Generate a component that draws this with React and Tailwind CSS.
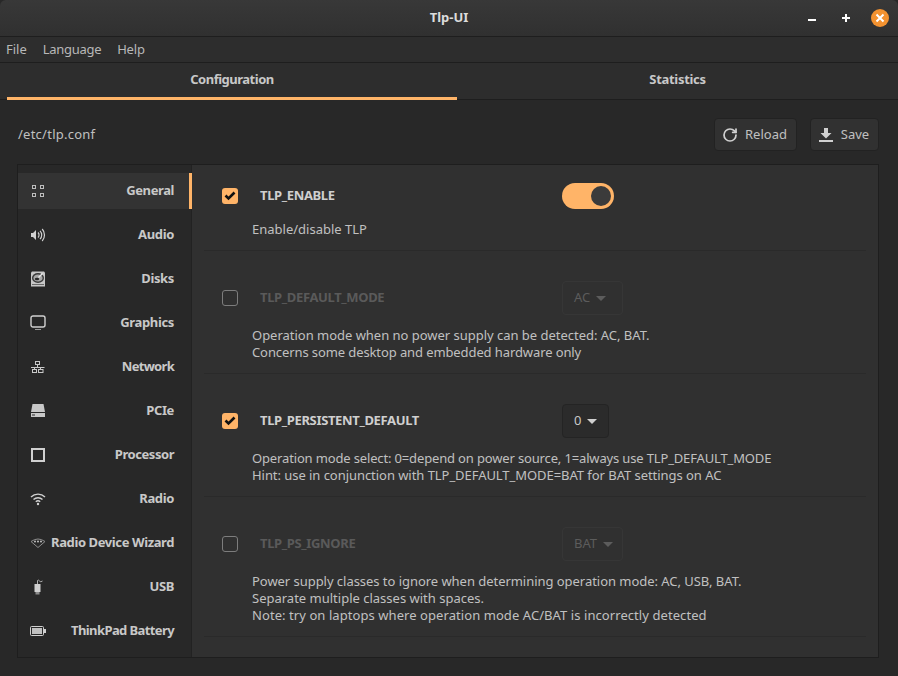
import React from 'react';
import { RotateCw } from 'lucide-react';

const FONT = "font-['Noto_Sans',sans-serif]";

const GeneralIcon = () => (
  <svg width="16" height="16" viewBox="0 0 16 16" fill="none" stroke="#bdbdbd" strokeWidth="1">
    <rect x="2.5" y="2.5" width="3" height="3" />
    <rect x="10.5" y="2.5" width="3" height="3" />
    <rect x="2.5" y="10.5" width="3" height="3" />
    <rect x="10.5" y="10.5" width="3" height="3" />
  </svg>
);

const AudioIcon = () => (
  <svg width="16" height="16" viewBox="0 0 16 16" fill="none" stroke="#d0d0d0" strokeWidth="1.2">
    <path d="M1 6h2l3-3v10l-3-3H1z" fill="#d0d0d0" stroke="none" />
    <path d="M8 5.5a3.5 3.5 0 0 1 0 5" />
    <path d="M10 3.8a6 6 0 0 1 0 8.4" />
    <path d="M12.2 2a9 9 0 0 1 0 12" />
  </svg>
);

const DiskIcon = () => (
  <svg width="16" height="16" viewBox="0 0 16 16" fill="none">
    <path d="M2 0.5h12l1 1v14H1v-14z" fill="#c8c8c8" />
    <ellipse cx="8" cy="7" rx="6" ry="5" fill="#3a3a3a" />
    <ellipse cx="8" cy="7" rx="4.6" ry="3.6" fill="#a8a8a8" />
    <ellipse cx="7" cy="8" rx="2.2" ry="1.2" fill="#2a2a2a" />
    <path d="M12.5 2.5 8.5 6.5" stroke="#e8e8e8" strokeWidth="1.4" />
    <rect x="2" y="13" width="12" height="1" fill="#6a6a6a" />
  </svg>
);

const MonitorIcon = () => (
  <svg width="16" height="16" viewBox="0 0 16 16" fill="none">
    <rect x="1" y="1" width="14" height="11" rx="2" stroke="#d0d0d0" strokeWidth="1.4" />
    <rect x="5" y="14" width="6" height="1" fill="#9a9a9a" />
  </svg>
);

const NetworkIcon = () => (
  <svg width="16" height="16" viewBox="0 0 16 16" fill="none" stroke="#c8c8c8" strokeWidth="1">
    <rect x="5.5" y="2.5" width="4" height="3" />
    <rect x="2.5" y="10.5" width="4" height="3" />
    <rect x="8.5" y="10.5" width="4.5" height="3" />
    <path d="M7.5 5.5v3M1 8.5h13.5M4.5 8.5v2M10.5 8.5v2" />
  </svg>
);

const PcieIcon = () => (
  <svg width="16" height="16" viewBox="0 0 16 16">
    <path d="M2.5 1h11l1.5 8H1z" fill="#c8c8c8" />
    <rect x="1" y="10" width="14" height="4" fill="#c8c8c8" />
    <rect x="2" y="11.5" width="3" height="1" fill="#2a2a2a" />
  </svg>
);

const CpuIcon = () => (
  <svg width="16" height="16" viewBox="0 0 16 16" fill="none">
    <rect x="2" y="2" width="12" height="12" stroke="#d0d0d0" strokeWidth="2" />
  </svg>
);

const WifiIcon = () => (
  <svg width="16" height="16" viewBox="0 0 16 16" fill="none" stroke="#d0d0d0" strokeWidth="1.4">
    <path d="M1 6a10 10 0 0 1 14 0" />
    <path d="M3.5 8.6a6.5 6.5 0 0 1 9 0" />
    <path d="M5.8 10.8a3.2 3.2 0 0 1 4.4 0" />
    <circle cx="8" cy="13" r="1.2" fill="#d0d0d0" stroke="none" />
  </svg>
);

const WizardIcon = () => (
  <svg width="16" height="16" viewBox="0 0 16 16" fill="none">
    <path d="M1 6.5Q8 1.5 15 6.5L8 12.5z" stroke="#8c8c8c" strokeWidth="1" />
    <circle cx="5" cy="6.5" r="0.9" fill="#d0d0d0" />
    <circle cx="8" cy="6.5" r="0.9" fill="#d0d0d0" />
    <circle cx="11" cy="6.5" r="0.9" fill="#d0d0d0" />
  </svg>
);

const UsbIcon = () => (
  <svg width="16" height="16" viewBox="0 0 16 16" fill="none">
    <rect x="4.5" y="5" width="6" height="8" fill="#d0d0d0" />
    <rect x="5.5" y="13" width="4" height="2.5" fill="#8c8c8c" />
    <path d="M7.5 5V1.5q1-1 2 .5t3 0" stroke="#b0b0b0" strokeWidth="1" />
  </svg>
);

const BatteryIcon = () => (
  <svg width="16" height="16" viewBox="0 0 16 16" fill="none">
    <rect x="0.5" y="3.5" width="13" height="9" rx="1" stroke="#d0d0d0" strokeWidth="1" />
    <rect x="2" y="5" width="10" height="6" fill="#c0c0c0" />
    <rect x="14" y="6" width="2" height="4" fill="#d0d0d0" />
  </svg>
);

const SaveIcon = () => (
  <svg width="16" height="16" viewBox="0 0 16 16" fill="#d0d0d0">
    <path d="M6 1h4v5h3.5L8 11.5 2.5 6H6z" />
    <rect x="1" y="13" width="14" height="2" />
  </svg>
);

const sections = [
  { name: 'General', icon: GeneralIcon, active: true, fit: 'tracking-[-0.4px]' },
  { name: 'Audio', icon: AudioIcon, fit: 'tracking-[-0.35px]' },
  { name: 'Disks', icon: DiskIcon, fit: 'tracking-[-0.35px]' },
  { name: 'Graphics', icon: MonitorIcon, fit: 'tracking-[-0.35px]' },
  { name: 'Network', icon: NetworkIcon, fit: 'tracking-[-0.7px]' },
  { name: 'PCIe', icon: PcieIcon, fit: 'tracking-[-0.35px]' },
  { name: 'Processor', icon: CpuIcon, fit: 'tracking-[-0.45px]' },
  { name: 'Radio', icon: WifiIcon, fit: 'tracking-[-0.35px]' },
  { name: 'Radio Device Wizard', icon: WizardIcon, fit: 'tracking-[-0.4px]' },
  { name: 'USB', icon: UsbIcon, fit: 'tracking-[-0.35px]' },
  { name: 'ThinkPad Battery', icon: BatteryIcon, fit: 'tracking-[-0.6px]' },
];

const Checkbox = ({ checked }) =>
  checked ? (
    <div className="w-4 h-4 rounded-[3px] bg-[#ffb468] flex items-center justify-center">
      <svg width="12" height="12" viewBox="0 0 12 12" fill="none" stroke="#111" strokeWidth="2.6">
        <path d="M1.5 5.5 4.5 8.5 10.5 2.5" />
      </svg>
    </div>
  ) : (
    <div className="w-4 h-4 rounded-[3px] border border-[#7d7d7d]" />
  );

const Toggle = () => (
  <div className="w-[52px] h-[26px] rounded-full bg-[#ffb468] flex items-center justify-end pr-[3px]">
    <div className="w-5 h-5 rounded-full bg-[#3b3b3b]" />
  </div>
);

const Select = ({ value, disabled }) => (
  <div
    className={`h-[34px] rounded-[4px] border flex items-center gap-1.5 ${
      disabled
        ? 'w-[61px] pl-[11px] border-[#363636] text-[#5c5c5c]'
        : 'w-[47px] pl-[11px] border-[#242424] bg-[#2b2b2b] text-[#c8c8c8]'
    }`}
  >
    <span>{value}</span>
    <span
      className={`w-0 h-0 border-x-[5px] border-x-transparent border-t-[5px] ${
        disabled ? 'border-t-[#5c5c5c]' : 'border-t-[#d0d0d0]'
      }`}
    />
  </div>
);

const Setting = ({ name, checked, control, lines, pad, barHeight }) => (
  <div className={`mx-[12px] border-b border-[#2a2a2a] ${pad}`}>
    <div className={`flex items-center ${barHeight}`}>
      <div className="w-[56px] pl-[18px] shrink-0">
        <Checkbox checked={checked} />
      </div>
      <div className={`w-[302px] font-bold tracking-[-0.35px] ${checked ? 'text-[#cfcfcf]' : 'text-[#5a5a5a]'}`}>{name}</div>
      {control}
    </div>
    <div className="pl-[48px] mt-[12px] leading-[17px] text-[#c0c0c0]">
      {lines.map(([text, fit]) => (
        <div key={text} className={fit}>{text}</div>
      ))}
    </div>
  </div>
);

export default function App() {
  return (
    <div className={`w-[898px] h-[676px] bg-[#282828] overflow-hidden flex flex-col text-[13px] ${FONT}`}>
      {/* Header */}
      <div className="h-[37px] shrink-0 rounded-t-[6px] bg-gradient-to-b from-[#383838] to-[#303030] border-b border-[#1e1e1e] flex items-center relative">
        <div className="w-full text-center font-bold text-[#dcdcdc]">Tlp-UI</div>
        <div className="absolute right-[9px] top-[9px] flex items-center">
          <span className="w-2 h-[2px] bg-white mr-[26px] mt-[4px]" />
          <span className="relative w-2 h-2 mr-[21px]">
            <span className="absolute left-0 top-[3px] w-2 h-[2px] bg-white" />
            <span className="absolute left-[3px] top-0 w-[2px] h-2 bg-white" />
          </span>
          <span className="w-[18px] h-[18px] rounded-full bg-[#f39230] flex items-center justify-center">
            <svg width="10" height="10" viewBox="0 0 10 10" stroke="#fff" strokeWidth="2">
              <path d="M1.5 1.5 8.5 8.5M8.5 1.5 1.5 8.5" />
            </svg>
          </span>
        </div>
      </div>

      {/* Menu */}
      <div className="h-[26px] shrink-0 bg-[#2d2d2d] border-b border-[#1e1e1e] flex items-center gap-4 pl-[6px] text-[#b8b8b8]">
        <span>File</span>
        <span className="tracking-[-0.3px]">Language</span>
        <span className="tracking-[-0.2px]">Help</span>
      </div>

      {/* Tabs */}
      <div className="h-[37px] shrink-0 bg-[#2d2d2d] border-b border-[#1e1e1e] flex pl-[7px] font-bold text-[#c8c8c8]">
        <div className="w-[450px] h-[37px] border-b-[3px] border-[#ffb468] flex items-center justify-center tracking-[-0.5px]">Configuration</div>
        <div className="flex-1 flex items-center justify-center pb-[3px] tracking-[-0.3px]">Statistics</div>
      </div>

      {/* Toolbar */}
      <div className="h-[64px] shrink-0 flex items-center justify-between pt-[5px] pl-[18px] pr-[19px] text-[#c0c0c0]">
        <span className="tracking-[0.25px]">/etc/tlp.conf</span>
        <div className="flex gap-[13px]">
          <div className="w-[83px] h-[33px] pr-[2px] rounded-[4px] bg-[#313131] border border-[#222] flex items-center justify-center gap-[7px]">
            <RotateCw size={16} strokeWidth={2.6} color="#d0d0d0" />
            <span>Reload</span>
          </div>
          <div className="w-[69px] h-[33px] pr-[2px] rounded-[4px] bg-[#313131] border border-[#222] flex items-center justify-center gap-[7px]">
            <SaveIcon />
            <span>Save</span>
          </div>
        </div>
      </div>

      {/* Body */}
      <div className="ml-[17px] w-[862px] h-[494px] shrink-0 border border-[#1e1e1e] flex">
        <div className="w-[173px] shrink-0 flex flex-col gap-2 pt-2 font-bold text-[#c8c8c8]">
          {sections.map((s) => {
            const Icon = s.icon;
            return (
              <div key={s.name} className={`h-[36px] shrink-0 flex items-center justify-between pl-[12px] pr-[17px] relative ${s.active ? 'bg-[#333333]' : ''}`}>
                <Icon />
                <span className={`whitespace-nowrap ${s.fit}`}>{s.name}</span>
                {s.active && <span className="absolute right-[-1px] top-0 w-[3px] h-full bg-[#ffb468]" />}
              </div>
            );
          })}
        </div>
        <div className="flex-1 bg-[#303030] border-l border-[#222] text-[#c0c0c0]">
          <Setting
            name="TLP_ENABLE"
            checked
            pad="pt-[18px] pb-[12px]"
            barHeight="h-[26px]"
            control={<Toggle />}
            lines={[['Enable/disable TLP', '']]}
          />
          <Setting
            name="TLP_DEFAULT_MODE"
            pad="pt-[30px] pb-[12px]"
            barHeight="h-[34px]"
            control={<Select value="AC" disabled />}
            lines={[
              ['Operation mode when no power supply can be detected: AC, BAT.', 'tracking-[-0.02px]'],
              ['Concerns some desktop and embedded hardware only', 'tracking-[-0.1px]'],
            ]}
          />
          <Setting
            name="TLP_PERSISTENT_DEFAULT"
            checked
            pad="pt-[30px] pb-[12px]"
            barHeight="h-[34px]"
            control={<Select value="0" />}
            lines={[
              ['Operation mode select: 0=depend on power source, 1=always use TLP_DEFAULT_MODE', 'tracking-[-0.15px]'],
              ['Hint: use in conjunction with TLP_DEFAULT_MODE=BAT for BAT settings on AC', 'tracking-[-0.05px]'],
            ]}
          />
          <Setting
            name="TLP_PS_IGNORE"
            pad="pt-[30px] pb-[12px]"
            barHeight="h-[34px]"
            control={<Select value="BAT" disabled />}
            lines={[
              ['Power supply classes to ignore when determining operation mode: AC, USB, BAT.', 'tracking-[-0.04px]'],
              ['Separate multiple classes with spaces.', ''],
              ['Note: try on laptops where operation mode AC/BAT is incorrectly detected', 'tracking-[0.07px]'],
            ]}
          />
        </div>
      </div>
    </div>
  );
}
